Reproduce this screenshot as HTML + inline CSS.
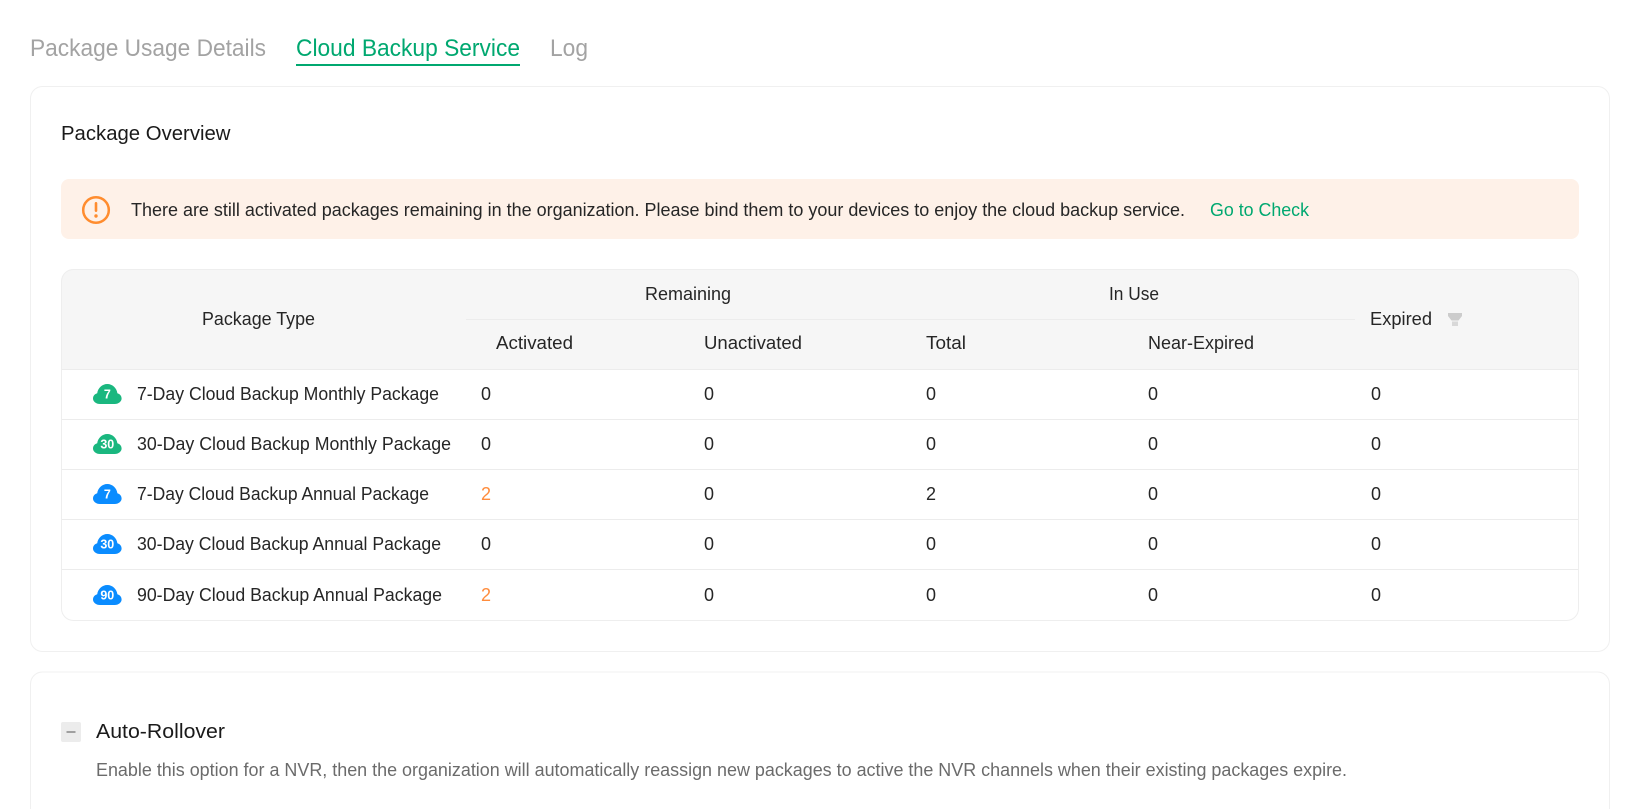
<!DOCTYPE html>
<html><head><meta charset="utf-8"><title>Cloud Backup Service</title>
<style>
html,body{margin:0;padding:0;background:#fff;width:1640px;height:809px;overflow:hidden}
svg{display:block}
text{font-family:"Liberation Sans",sans-serif;fill:#262626;font-size:18px}
.c{fill:#fff;font-size:12.5px;font-weight:700;text-anchor:middle}
.n{font-size:18px}
</style></head><body>
<svg width="1640" height="809" viewBox="0 0 1640 809" xmlns="http://www.w3.org/2000/svg">
<defs>
<path id="cl" d="M7 20C3 20 0 17.5 0 14.5C0 11.8 1.8 9.9 4.2 9.2C5 3.9 9.2 0 14.3 0C19.4 0 23.6 3.9 24.4 9.2C26.8 9.9 28.6 11.8 28.6 14.5C28.6 17.5 25.6 20 21.6 20Z"/>
</defs>
<text x="30" y="56" textLength="236" lengthAdjust="spacingAndGlyphs" style="font-size:24px;fill:#a3a3a3">Package Usage Details</text>
<text x="296" y="56" textLength="224" lengthAdjust="spacingAndGlyphs" style="font-size:24px;fill:#00a870">Cloud Backup Service</text>
<text x="550" y="56" textLength="38" lengthAdjust="spacingAndGlyphs" style="font-size:24px;fill:#a3a3a3">Log</text>
<rect x="296" y="64" width="224" height="2" fill="#00a870"/>

<rect x="30.5" y="86.5" width="1579" height="565" rx="12" fill="#fff" stroke="#f0f0f0"/>
<text x="61" y="140" textLength="169.5" lengthAdjust="spacingAndGlyphs" style="font-size:20px;fill:#1a1a1a">Package Overview</text>

<rect x="61" y="179" width="1518" height="60" rx="8" fill="#fef1e8"/>
<circle cx="96" cy="210" r="12.8" fill="none" stroke="#ff8c2e" stroke-width="2.5"/>
<rect x="94.7" y="202" width="2.6" height="10" rx="1.2" fill="#ff8c2e"/>
<circle cx="96" cy="216" r="1.7" fill="#ff8c2e"/>
<text x="131" y="216" textLength="1054" lengthAdjust="spacingAndGlyphs">There are still activated packages remaining in the organization. Please bind them to your devices to enjoy the cloud backup service.</text>
<text x="1210" y="216" textLength="99" lengthAdjust="spacingAndGlyphs" style="fill:#00a870">Go to Check</text>

<path d="M61.5 369V281a12 12 0 0 1 12-12H1566.5a12 12 0 0 1 12 12V369Z" fill="#f6f6f6"/>
<rect x="61.5" y="269.5" width="1517" height="351" rx="12" fill="none" stroke="#eeeeee"/>
<rect x="466" y="319" width="889" height="1" fill="#ececec"/>
<rect x="62" y="369" width="1516" height="1" fill="#ececec"/>
<rect x="62" y="419" width="1516" height="1" fill="#ececec"/>
<rect x="62" y="469" width="1516" height="1" fill="#ececec"/>
<rect x="62" y="519" width="1516" height="1" fill="#ececec"/>
<rect x="62" y="569" width="1516" height="1" fill="#ececec"/>

<text x="202" y="325" textLength="113" lengthAdjust="spacingAndGlyphs">Package Type</text>
<text x="645" y="300" textLength="86" lengthAdjust="spacingAndGlyphs">Remaining</text>
<text x="1109" y="300" textLength="50" lengthAdjust="spacingAndGlyphs">In Use</text>
<text x="496" y="349" textLength="77" lengthAdjust="spacingAndGlyphs">Activated</text>
<text x="704" y="349" textLength="98" lengthAdjust="spacingAndGlyphs">Unactivated</text>
<text x="926" y="349" textLength="40" lengthAdjust="spacingAndGlyphs">Total</text>
<text x="1148" y="349" textLength="106" lengthAdjust="spacingAndGlyphs">Near-Expired</text>
<text x="1370" y="325" textLength="62" lengthAdjust="spacingAndGlyphs">Expired</text>
<path d="M1448 313H1462V316L1458.5 320.5H1451.5L1448 316Z" fill="#cccccc"/>
<rect x="1452" y="321.5" width="6" height="4.5" fill="#d8d8d8"/>

<use href="#cl" x="93" y="384" fill="#1ab77f"/><text class="c" x="107.3" y="398.5">7</text>
<use href="#cl" x="93" y="434" fill="#1ab77f"/><text class="c" x="107.3" y="448.5">30</text>
<use href="#cl" x="93" y="484" fill="#0a8cff"/><text class="c" x="107.3" y="498.5">7</text>
<use href="#cl" x="93" y="534" fill="#0a8cff"/><text class="c" x="107.3" y="548.5">30</text>
<use href="#cl" x="93" y="585" fill="#0a8cff"/><text class="c" x="107.3" y="599.5">90</text>

<text x="137" y="400" textLength="302" lengthAdjust="spacingAndGlyphs">7-Day Cloud Backup Monthly Package</text>
<text x="137" y="450" textLength="314" lengthAdjust="spacingAndGlyphs">30-Day Cloud Backup Monthly Package</text>
<text x="137" y="500" textLength="292" lengthAdjust="spacingAndGlyphs">7-Day Cloud Backup Annual Package</text>
<text x="137" y="550" textLength="304" lengthAdjust="spacingAndGlyphs">30-Day Cloud Backup Annual Package</text>
<text x="137" y="601" textLength="305" lengthAdjust="spacingAndGlyphs">90-Day Cloud Backup Annual Package</text>

<g class="n">
<text x="481" y="400">0</text><text x="704" y="400">0</text><text x="926" y="400">0</text><text x="1148" y="400">0</text><text x="1371" y="400">0</text>
<text x="481" y="450">0</text><text x="704" y="450">0</text><text x="926" y="450">0</text><text x="1148" y="450">0</text><text x="1371" y="450">0</text>
<text x="481" y="500" style="fill:#ff8c3c">2</text><text x="704" y="500">0</text><text x="926" y="500">2</text><text x="1148" y="500">0</text><text x="1371" y="500">0</text>
<text x="481" y="550">0</text><text x="704" y="550">0</text><text x="926" y="550">0</text><text x="1148" y="550">0</text><text x="1371" y="550">0</text>
<text x="481" y="601" style="fill:#ff8c3c">2</text><text x="704" y="601">0</text><text x="926" y="601">0</text><text x="1148" y="601">0</text><text x="1371" y="601">0</text>
</g>

<path d="M30.5 809V684a12 12 0 0 1 12-12H1597.5a12 12 0 0 1 12 12V809" fill="#fff" stroke="#f0f0f0"/>
<rect x="61" y="722" width="20" height="20" rx="2" fill="#ececec"/>
<rect x="66.5" y="731.5" width="9" height="1" fill="#555"/>
<text x="96" y="738" textLength="129" lengthAdjust="spacingAndGlyphs" style="font-size:20px;fill:#1a1a1a">Auto-Rollover</text>
<text x="96" y="776" textLength="1251" lengthAdjust="spacingAndGlyphs" style="fill:#6b6b6b">Enable this option for a NVR, then the organization will automatically reassign new packages to active the NVR channels when their existing packages expire.</text>
</svg>
</body></html>
